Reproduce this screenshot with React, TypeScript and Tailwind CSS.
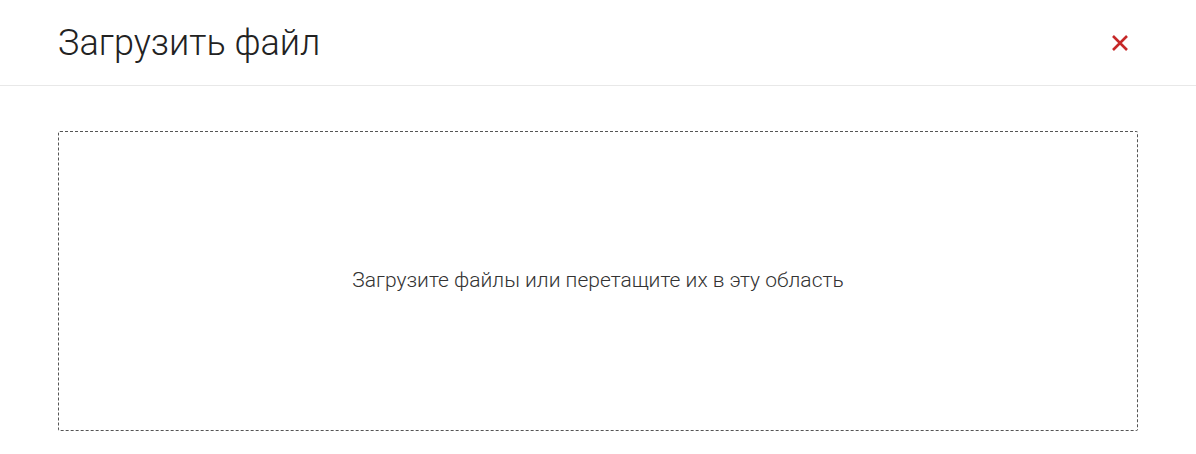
export default function App() {
  return (
    <div className="w-[1196px] h-[454px] bg-white" style={{ fontFamily: 'Roboto, "Liberation Sans", sans-serif' }}>
      <div className="flex items-center justify-between h-[86px] pl-[58px] pr-[68px] border-b border-[#e8e8e8]">
        <h1 className="text-[36px] font-light text-[#222] leading-none">Загрузить файл</h1>
        <button className="w-[16px] h-[16px] flex items-center justify-center">
          <svg width="16" height="16" viewBox="0 0 16 16">
            <path d="M1 1L15 15M15 1L1 15" stroke="#c62828" strokeWidth="2.6" strokeLinecap="butt" />
          </svg>
        </button>
      </div>
      <div className="px-[58px] pt-[45px]">
        <div className="h-[300px] border border-dashed border-[#555] rounded-[2px] flex items-center justify-center">
          <span className="text-[21px] text-[#333] font-light">Загрузите файлы или перетащите их в эту область</span>
        </div>
      </div>
    </div>
  );
}
